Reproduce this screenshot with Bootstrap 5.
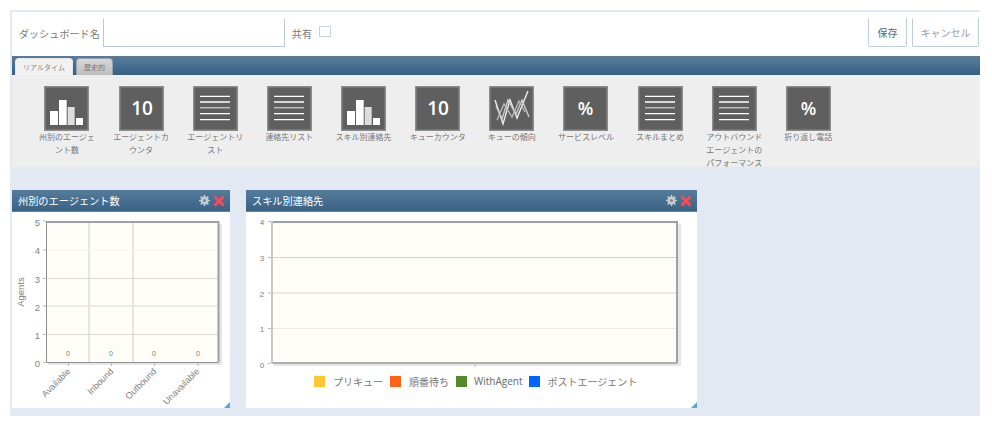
<!DOCTYPE html>
<html lang="ja">
<head>
<meta charset="utf-8">
<title>ダッシュボード</title>
<link href="https://cdn.jsdelivr.net/npm/bootstrap@5.3.0/dist/css/bootstrap.min.css" rel="stylesheet">
<style>
html,body{height:100%;background:#fff;overflow:hidden}
body{font-family:"Noto Sans CJK JP","Liberation Sans",sans-serif;font-size:10px;color:#777}
.shell{margin:10px 12px 0 10px;width:970px;height:406px;background:#e2e9f3;border-top:2px solid #e2e9f3;border-left:2px solid #e2e9f3}
.headbar{height:44px;background:#fff;padding:6px 1px 7px 7px}
.headlabel{font-size:10px;line-height:31px;color:#777;letter-spacing:.1px}
.nameinput.form-control{width:182px;height:29px;margin:0 7px 0 3px;padding:0;border-radius:0;border:1px solid #b8c9d8;border-top-color:#fff;background:#fff}
.sharecheck.form-check-input{width:12px;height:11px;margin:0 0 3px 7px;border:1px solid #c8d4e0;border-radius:0;background:#fff}
.headbtn.btn{height:29px;padding:0;font-size:10px;line-height:27px;border-radius:0 0 2px 2px;border:1px solid #bccfdf;border-top-color:#fff;background:#fff}
.savebtn.btn{width:39px;color:#567;margin-right:5px}
.cancelbtn.btn{width:67px;color:#99a}
.tabstrip.nav{height:19px;padding:2px 0 0 3px;gap:3px;border:0;flex-wrap:nowrap;background:linear-gradient(#5d7b96,#4c7497 35%,#365f85)}
.tabstrip .nav-link{height:17px;padding:0;margin:0;font-size:7px;line-height:17px;text-align:center;border:1px solid #aab;border-bottom:0;border-radius:4px 4px 0 0}
.tabstrip .nav-link.active{width:58px;color:#888;background:#f2f2f2;border-color:#e8e8e8}
.tabstrip .nav-link.idle{width:37px;color:#777;background:linear-gradient(#d8d8d8,#bdbdbd);border-color:#97a5b3}
.palette{height:92px;background:#eee;padding:11px 0 0 17.9px;overflow:hidden;gap:0}
.tile{width:74.15px;flex:none;text-align:center}
.tileicon{display:block;width:45px;height:45px;margin:0 auto}
.tilelabel{width:60px;margin:-1px auto 0;font-size:8px;line-height:13.2px;color:#777;word-break:break-all}
.board{height:247px;padding-top:23px;gap:16px}
.widget{position:relative;height:218px;background:#fff;flex:none}
.w-state{width:218px}
.w-skill{width:451px}
.widgethead{height:22px;padding:1px 5px 0 6px;color:#fff;font-size:10.2px;line-height:22px;background:linear-gradient(#567c9b,#3a6285);border-bottom:1px solid #3f8cc4}
.headicons{gap:3px;margin-top:-1px}
.chartsvg{display:block}
.legendrow{padding:4px 0 0 68px;font-size:10px;line-height:11px;color:#777}
.swatch{width:11px;height:11px;flex:none}
.legendtext{margin:1px 7px 0 8px;white-space:nowrap}
.legendtext-latin{font-family:"Open Sans","Liberation Sans",sans-serif;margin:1px 6px 0 7px;color:#666}
.grip{position:absolute;right:0;bottom:0;width:6px;height:6px;background:#5aa6d6;clip-path:polygon(100% 0,100% 100%,0 100%)}
.atext{font-family:"Liberation Sans",sans-serif;fill:#808080}
</style>
</head>
<body>
<svg width="0" height="0" class="position-absolute">
  <defs>
    <symbol id="i-bars" viewBox="0 0 45 45"><rect x=".75" y=".75" width="43.5" height="43.5" fill="#5f5f5f" stroke="#8c8c8c" stroke-width="1.5"/><rect x="6" y="25" width="8" height="14" fill="#fff"/><rect x="15" y="14" width="7.7" height="25" fill="#fff"/><rect x="23.7" y="21" width="7" height="18" fill="#ddd"/><rect x="32" y="32" width="7" height="7" fill="#fff"/></symbol>
    <symbol id="i-ten" viewBox="0 0 45 45"><rect x=".75" y=".75" width="43.5" height="43.5" fill="#5f5f5f" stroke="#8c8c8c" stroke-width="1.5"/><text x="23" y="29" text-anchor="middle" font-family="Open Sans,Liberation Sans,sans-serif" font-weight="600" font-size="19" fill="#fff">10</text></symbol>
    <symbol id="i-list" viewBox="0 0 45 45"><rect x=".75" y=".75" width="43.5" height="43.5" fill="#5f5f5f" stroke="#8c8c8c" stroke-width="1.5"/><path d="M7 10.3h30M7 16h30M7 27.7h30M7 33.7h30" stroke="#fff" stroke-width="1.3" fill="none"/><path d="M7 21.7h30" stroke="#bbb" stroke-width="1.5" fill="none"/></symbol>
    <symbol id="i-pct" viewBox="0 0 45 45"><rect x=".75" y=".75" width="43.5" height="43.5" fill="#5f5f5f" stroke="#8c8c8c" stroke-width="1.5"/><text x="22.5" y="29" text-anchor="middle" font-family="Open Sans,Liberation Sans,sans-serif" font-weight="600" font-size="18" fill="#fff">%</text></symbol>
    <symbol id="i-trend" viewBox="0 0 45 45"><rect x=".75" y=".75" width="43.5" height="43.5" fill="#5f5f5f" stroke="#8c8c8c" stroke-width="1.5"/><path d="M6 14 14 38 21 14 28 32 39 5" stroke="#eee" stroke-width="1.4" fill="none"/><path d="M7 20 13 33 19 14 27 28 33 14 40 31" stroke="#ccc" stroke-width="1.4" fill="none"/><path d="M8 34 15 18 23 31 30 15 36 26" stroke="#bbb" stroke-width="1.3" fill="none"/></symbol>
    <symbol id="i-gear" viewBox="0 0 12 12"><circle cx="6" cy="6" r="3.1" fill="none" stroke="#c6ccd2" stroke-width="2.4"/><path d="M6 0v12M0 6h12M1.8 1.8l8.4 8.4M10.2 1.8l-8.4 8.4" stroke="#c6ccd2" stroke-width="1.7"/><circle cx="6" cy="6" r="1.5" fill="#6b8297"/></symbol>
    <symbol id="i-close" viewBox="0 0 12 12"><path d="M1.5 1.5l9 9M10.5 1.5l-9 9" stroke="#fb4a55" stroke-width="3"/></symbol>
  </defs>
</svg>

<div class="shell">
  <div class="headbar d-flex align-items-start">
    <span class="headlabel">ダッシュボード名</span>
    <input class="nameinput form-control" type="text" aria-label="ダッシュボード名">
    <span class="headlabel">共有</span>
    <input class="sharecheck form-check-input mt-2" type="checkbox" aria-label="共有">
    <button type="button" class="headbtn savebtn btn ms-auto">保存</button>
    <button type="button" class="headbtn cancelbtn btn">キャンセル</button>
  </div>

  <ul class="tabstrip nav nav-tabs">
    <li class="nav-item"><a class="nav-link active" href="#">リアルタイム</a></li>
    <li class="nav-item"><a class="nav-link idle" href="#">歴史的</a></li>
  </ul>

  <div class="palette d-flex">
    <div class="tile"><svg class="tileicon"><use href="#i-bars"/></svg><div class="tilelabel">州別のエージェント数</div></div>
    <div class="tile"><svg class="tileicon"><use href="#i-ten"/></svg><div class="tilelabel">エージェントカウンタ</div></div>
    <div class="tile"><svg class="tileicon"><use href="#i-list"/></svg><div class="tilelabel">エージェントリスト</div></div>
    <div class="tile"><svg class="tileicon"><use href="#i-list"/></svg><div class="tilelabel">連絡先リスト</div></div>
    <div class="tile"><svg class="tileicon"><use href="#i-bars"/></svg><div class="tilelabel">スキル別連絡先</div></div>
    <div class="tile"><svg class="tileicon"><use href="#i-ten"/></svg><div class="tilelabel">キューカウンタ</div></div>
    <div class="tile"><svg class="tileicon"><use href="#i-trend"/></svg><div class="tilelabel">キューの傾向</div></div>
    <div class="tile"><svg class="tileicon"><use href="#i-pct"/></svg><div class="tilelabel">サービスレベル</div></div>
    <div class="tile"><svg class="tileicon"><use href="#i-list"/></svg><div class="tilelabel">スキルまとめ</div></div>
    <div class="tile"><svg class="tileicon"><use href="#i-list"/></svg><div class="tilelabel">アウトバウンドエージェントのパフォーマンス</div></div>
    <div class="tile"><svg class="tileicon"><use href="#i-pct"/></svg><div class="tilelabel">折り返し電話</div></div>
  </div>

  <div class="board d-flex">
    <div class="widget w-state">
      <div class="widgethead d-flex justify-content-between align-items-center">
        <span>州別のエージェント数</span>
        <span class="headicons d-flex"><svg width="11" height="11"><use href="#i-gear"/></svg><svg width="12" height="12"><use href="#i-close"/></svg></span>
      </div>
      <svg class="chartsvg" width="218" height="195" viewBox="12 213 218 195">
        <rect x="48" y="225" width="174" height="141" fill="#e6e6e6"/>
        <rect x="46" y="222" width="173" height="141.500" fill="#fffdf8"/>
        <path d="M89 222v142M133 222v142" stroke="#cfcdc8" fill="none"/>
        <path d="M46 279.500h173M46 335.500h173" stroke="#dcdad4" fill="none"/>
        <path d="M46 251h173" stroke="#f6f4ef" fill="none"/>
        <path d="M46 307h173" stroke="#e6e4de" stroke-width="1.500" fill="none"/>
        <path d="M46 223h172.500v140.500" stroke="#a0a0a0" stroke-width="2" fill="none"/>
        <path d="M46.500 222v141.500H218" stroke="#8f8f8f" fill="none"/>
        <path d="M43 222h3M43 251h3M43 279.500h3M43 307h3M43 335.500h3M43 363.500h3M68.500 364v3M111.500 364v3M154.500 364v3M198 364v3" stroke="#bbb" fill="none"/>
        <g class="atext" font-size="9.500" text-anchor="end">
          <text x="40" y="226.500">5</text><text x="40" y="255">4</text><text x="40" y="283.500">3</text><text x="40" y="311.500">2</text><text x="40" y="339.500">1</text><text x="40" y="367.500">0</text>
        </g>
        <text class="atext" font-size="9.500" text-anchor="middle" transform="translate(24 293) rotate(-90)">Agents</text>
        <g class="atext" font-size="7" text-anchor="middle">
          <text x="68" y="357">0</text><text x="111" y="357">0</text><text x="154" y="357">0</text><text x="198" y="357">0</text>
        </g>
        <g class="atext" font-size="9" text-anchor="end">
          <text transform="translate(71 373) rotate(-45)">Available</text>
          <text transform="translate(114 373) rotate(-45)">Inbound</text>
          <text transform="translate(157 373) rotate(-45)">Outbound</text>
          <text transform="translate(200 373) rotate(-45)">Unavailable</text>
        </g>
      </svg>
      <div class="grip"></div>
    </div>

    <div class="widget w-skill">
      <div class="widgethead d-flex justify-content-between align-items-center">
        <span>スキル別連絡先</span>
        <span class="headicons d-flex"><svg width="11" height="11"><use href="#i-gear"/></svg><svg width="12" height="12"><use href="#i-close"/></svg></span>
      </div>
      <svg class="chartsvg" width="451" height="159" viewBox="246 213 451 159">
        <rect x="274" y="225" width="407" height="142" fill="#e6e6e6"/>
        <rect x="272" y="222" width="406" height="142" fill="#fffdf8"/>
        <path d="M272 258.500h406" stroke="#d4d2cc" fill="none"/>
        <path d="M272 294h406" stroke="#e4e2dc" stroke-width="1.500" fill="none"/>
        <path d="M272 329.500h406" stroke="#ecebe6" fill="none"/>
        <path d="M272 223h405v141" stroke="#a0a0a0" stroke-width="2" fill="none"/>
        <path d="M272 364h405" stroke="#999" stroke-width="1.500" fill="none"/>
        <path d="M272 222v142" stroke="#c8c8c8" stroke-width="2" fill="none"/>
        <path d="M268 222.500h3M268 258.500h3M268 294h3M268 329.500h3M268 364.500h3M475 365v3" stroke="#bbb" fill="none"/>
        <g class="atext" font-size="8" text-anchor="middle">
          <text x="262" y="226">4</text><text x="262" y="262">3</text><text x="262" y="297.500">2</text><text x="262" y="333">1</text><text x="262" y="368.500">0</text>
        </g>
      </svg>
      <div class="legendrow d-flex align-items-center">
        <span class="swatch" style="background:#ffc832"></span><span class="legendtext">プリキュー</span>
        <span class="swatch" style="background:#ff6318"></span><span class="legendtext">順番待ち</span>
        <span class="swatch" style="background:#54882a"></span><span class="legendtext legendtext-latin">WithAgent</span>
        <span class="swatch" style="background:#0066ff"></span><span class="legendtext">ポストエージェント</span>
      </div>
      <div class="grip"></div>
    </div>
  </div>
</div>
<script src="https://cdn.jsdelivr.net/npm/bootstrap@5.3.0/dist/js/bootstrap.bundle.min.js"></script>
</body>
</html>
